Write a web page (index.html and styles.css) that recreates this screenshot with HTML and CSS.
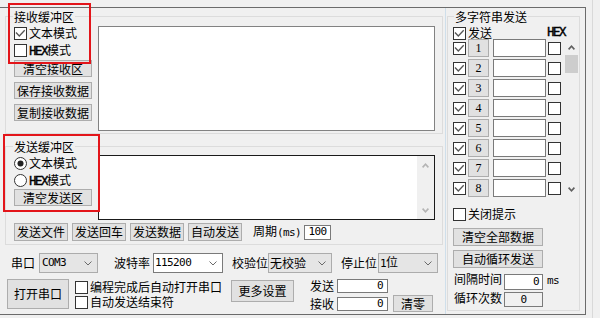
FILE: index.html
```html
<!DOCTYPE html>
<html lang="zh-CN">
<head>
<meta charset="utf-8">
<title>串口助手</title>
<link rel="stylesheet" href="styles.css">
</head>
<body>
<svg class="defs" width="0" height="0" aria-hidden="true">
  <defs>
    <symbol id="cb-off" viewBox="0 0 13 13"><rect x="0.5" y="0.5" width="12" height="12" fill="#fff" stroke="#333"/></symbol>
    <symbol id="cb-on" viewBox="0 0 13 13"><rect x="0.5" y="0.5" width="12" height="12" fill="#fff" stroke="#333"/><path d="M2 5.5 L5.3 9 L10.7 3.3" fill="none" stroke="#555" stroke-width="1.3"/></symbol>
    <symbol id="rb-on" viewBox="0 0 13 13"><circle cx="6.5" cy="6.5" r="6" fill="#fff" stroke="#333"/><circle cx="6.5" cy="6.5" r="3" fill="#222"/></symbol>
    <symbol id="rb-off" viewBox="0 0 13 13"><circle cx="6.5" cy="6.5" r="6" fill="#fff" stroke="#333"/></symbol>
    <symbol id="chev" viewBox="0 0 8 5"><path d="M0.5 0.5 L4 4 L7.5 0.5" fill="none" stroke="#6a6a6a" stroke-width="1"/></symbol>
    <symbol id="arr-up" viewBox="0 0 7 5"><path d="M0.6 4.4 L3.5 1.2 L6.4 4.4" fill="none" stroke="currentColor" stroke-width="1.6"/></symbol>
    <symbol id="arr-down" viewBox="0 0 7 5"><path d="M0.6 0.6 L3.5 3.8 L6.4 0.6" fill="none" stroke="currentColor" stroke-width="1.6"/></symbol>
  </defs>
</svg>
<div class="screen">
  <div class="window">
    <div class="left">
      <div class="group recv">
        <div class="gcol">
          <div class="legend">接收缓冲区</div>
          <div class="chk c1"><svg class="cb"><use href="#cb-on"/></svg><span>文本模式</span></div>
          <div class="chk c2"><svg class="cb"><use href="#cb-off"/></svg><span><span class="hex">HEX</span>模式</span></div>
          <button class="btn gbtn first">清空接收区</button>
          <button class="btn gbtn">保存接收数据</button>
          <button class="btn gbtn">复制接收数据</button>
        </div>
        <div class="edit recv-edit"></div>
      </div>

      <div class="group send">
        <div class="send-top">
          <div class="gcol">
            <div class="legend">发送缓冲区</div>
            <div class="chk c1"><svg class="cb"><use href="#rb-on"/></svg><span>文本模式</span></div>
            <div class="chk c2"><svg class="cb"><use href="#rb-off"/></svg><span><span class="hex">HEX</span>模式</span></div>
            <button class="btn gbtn first2">清空发送区</button>
          </div>
          <div class="edit send-edit">
            <div class="vscroll">
              <svg class="arr"><use href="#arr-up"/></svg>
              <svg class="arr"><use href="#arr-down"/></svg>
            </div>
          </div>
        </div>
        <div class="send-btns">
          <button class="btn sbtn">发送文件</button>
          <button class="btn sbtn">发送回车</button>
          <button class="btn sbtn">发送数据</button>
          <button class="btn sbtn">自动发送</button>
          <span class="period">周期<span class="a">(ms)</span></span>
          <div class="inp period-inp a">100</div>
        </div>
      </div>

      <div class="prow1">
        <span class="lbl l-port">串口</span>
        <div class="sel gray w-com"><span class="a com">COM3</span><svg class="chev"><use href="#chev"/></svg></div>
        <span class="lbl l-baud">波特率</span>
        <div class="sel white w-baud"><span class="a">115200</span><svg class="chev"><use href="#chev"/></svg></div>
        <span class="lbl l-par">校验位</span>
        <div class="sel gray w-par"><span>无校验</span><svg class="chev"><use href="#chev"/></svg></div>
        <span class="lbl l-stop">停止位</span>
        <div class="sel gray w-stop"><span><span class="a">1</span>位</span><svg class="chev"><use href="#chev"/></svg></div>
      </div>

      <div class="prow2">
        <button class="btn open-btn">打开串口</button>
        <div class="opt-col">
          <div class="chk"><svg class="cb"><use href="#cb-off"/></svg><span>编程完成后自动打开串口</span></div>
          <div class="chk"><svg class="cb"><use href="#cb-off"/></svg><span>自动发送结束符</span></div>
        </div>
        <button class="btn more-btn">更多设置</button>
        <div class="cnt">
          <span class="cnt-lbl">发送</span>
          <div class="inp cnt-inp a">0</div>
          <span class="cnt-lbl">接收</span>
          <div class="inp cnt-inp a">0</div>
        </div>
        <button class="btn clear-btn">清零</button>
      </div>
    </div>

    <div class="right">
      <div class="group multi">
        <div class="legend">多字符串发送</div>
        <div class="mhead">
          <svg class="cb"><use href="#cb-on"/></svg>
          <span class="mhead-send">发送</span>
          <span class="hex mhead-hex">HEX</span>
        </div>
        <div class="mrows">
          <div class="mlist">
            <div class="mrow"><svg class="cb"><use href="#cb-on"/></svg><button class="btn nbtn">1</button><div class="inp minp"></div><svg class="cb hcb"><use href="#cb-off"/></svg></div>
            <div class="mrow"><svg class="cb"><use href="#cb-on"/></svg><button class="btn nbtn">2</button><div class="inp minp"></div><svg class="cb hcb"><use href="#cb-off"/></svg></div>
            <div class="mrow"><svg class="cb"><use href="#cb-on"/></svg><button class="btn nbtn">3</button><div class="inp minp"></div><svg class="cb hcb"><use href="#cb-off"/></svg></div>
            <div class="mrow"><svg class="cb"><use href="#cb-on"/></svg><button class="btn nbtn">4</button><div class="inp minp"></div><svg class="cb hcb"><use href="#cb-off"/></svg></div>
            <div class="mrow"><svg class="cb"><use href="#cb-on"/></svg><button class="btn nbtn">5</button><div class="inp minp"></div><svg class="cb hcb"><use href="#cb-off"/></svg></div>
            <div class="mrow"><svg class="cb"><use href="#cb-on"/></svg><button class="btn nbtn">6</button><div class="inp minp"></div><svg class="cb hcb"><use href="#cb-off"/></svg></div>
            <div class="mrow"><svg class="cb"><use href="#cb-on"/></svg><button class="btn nbtn">7</button><div class="inp minp"></div><svg class="cb hcb"><use href="#cb-off"/></svg></div>
            <div class="mrow"><svg class="cb"><use href="#cb-on"/></svg><button class="btn nbtn">8</button><div class="inp minp"></div><svg class="cb hcb"><use href="#cb-off"/></svg></div>
          </div>
          <div class="mscroll">
            <div class="sarea"><svg class="arr dark"><use href="#arr-up"/></svg></div>
            <div class="thumb"></div>
            <div class="sfill"></div>
            <div class="sarea"><svg class="arr dark"><use href="#arr-down"/></svg></div>
          </div>
        </div>
        <div class="chk mclose"><svg class="cb"><use href="#cb-off"/></svg><span>关闭提示</span></div>
        <button class="btn wbtn w1">清空全部数据</button>
        <button class="btn wbtn w2">自动循环发送</button>
        <div class="mint">
          <span class="mlbl">间隔时间</span>
          <div class="inp mval a">0</div>
          <span class="a ms">ms</span>
        </div>
        <div class="mcnt">
          <span class="mlbl">循环次数</span>
          <div class="inp mval dis a">0</div>
        </div>
      </div>
    </div>
  </div>
  <div class="vline"></div>
  <div class="mark mark-recv"></div>
  <div class="mark mark-send"></div>
</div>
</body>
</html>
```
FILE: styles.css
```css
* { box-sizing: border-box; }
html, body { margin: 0; padding: 0; }
body {
  background: #f0f0f0;
  font-family: "Noto Sans CJK SC", "Noto Sans", sans-serif;
  font-size: 12px;
  line-height: 14px;
  color: #000;
}
.defs { position: absolute; width: 0; height: 0; overflow: hidden; }

.screen { position: relative; width: 600px; height: 318px; display: flex; overflow: hidden; }
.window {
  margin-top: 7px;
  width: 586px;
  height: 308px;
  border-top: 1px solid #6b6b6b;
  border-right: 1px solid #6b6b6b;
  border-bottom: 1px solid #6b6b6b;
  display: flex;
  flex: none;
}
.vline { margin-left: 6px; width: 1px; height: 318px; background: #d9d9d9; flex: none; }

.a { font-family: "DejaVu Sans Mono", monospace; font-size: 11px; letter-spacing: -0.6px; }
.hex {
  font-family: "Liberation Mono", monospace;
  font-weight: normal;
  font-size: 12.5px;
  letter-spacing: -1.5px;
  -webkit-text-stroke: 0.45px #000;
}

/* generic controls */
.btn {
  font: inherit;
  font-size: 12px;
  line-height: 14px;
  color: #000;
  margin: 0;
  padding: 0;
  border: 1px solid #adadad;
  background: #e1e1e1;
  display: flex;
  align-items: center;
  justify-content: center;
  white-space: nowrap;
  flex: none;
}
.edit { background: #fff; border: 1px solid #828282; flex: none; }
.inp {
  background: #fff;
  border: 1px solid #7a7a7a;
  flex: none;
  display: flex;
  align-items: center;
  justify-content: flex-end;
  padding-right: 3px;
}
.chk { display: flex; align-items: flex-start; height: 14px; gap: 2px; white-space: nowrap; flex: none; }
.cb { width: 13px; height: 13px; flex: none; margin-top: 1px; }
.arr { width: 7px; height: 5px; color: #b4b4b4; }
.arr.dark { color: #606060; }
.chev { width: 8px; height: 5px; flex: none; }

.group { border: 1px solid #dcdcdc; flex: none; }
.legend {
  margin: -7px 0 0 -1px;
  padding: 0 1px;
  height: 14px;
  line-height: 14px;
  background: #f0f0f0;
  white-space: nowrap;
  flex: none;
}

/* left panel */
.left {
  width: 446px;
  border-right: 1px solid #cfdfeb;
  display: flex;
  flex-direction: column;
  flex: none;
}
.gcol { width: 78px; display: flex; flex-direction: column; align-items: flex-start; flex: none; }
.gcol .c1 { margin-top: 2px; }
.gcol .c2 { margin-top: 3px; }
.gbtn { width: 78px; height: 17px; margin-top: 5px; }
.gbtn.first { margin-top: 3px; }
.gbtn.first2 { margin-top: 2px; }

.recv {
  margin: 8px 0 0 5px;
  width: 438px;
  height: 118px;
  display: flex;
  gap: 6px;
  padding: 0 7px 0 8px;
}
.recv-edit { margin-top: 9px; width: 337px; height: 105px; }

.send {
  margin: 12px 0 0 5px;
  width: 438px;
  height: 99px;
  padding: 0 7px 0 8px;
  display: flex;
  flex-direction: column;
}
.send-top { display: flex; gap: 6px; }
.send-edit {
  margin-top: 8px;
  width: 337px;
  height: 65px;
  border-color: #1a1a1a;
  display: flex;
  justify-content: flex-end;
}
.vscroll {
  width: 17px;
  height: 100%;
  background: #f0f0f0;
  display: flex;
  flex-direction: column;
  justify-content: space-between;
  align-items: center;
  padding: 7px 0 6px;
}
.send-btns { margin-top: 3px; height: 18px; display: flex; align-items: center; gap: 4px; }
.sbtn { width: 54px; height: 18px; }
.period { margin-left: 7px; white-space: nowrap; }
.period-inp { width: 27px; height: 15px; margin-left: -1px; justify-content: center; padding: 0; }

/* port settings */
.prow1 { margin-top: 8px; height: 20px; display: flex; align-items: center; padding-left: 11px; }
.lbl { white-space: nowrap; flex: none; }
.l-port { margin-right: 4px; }
.l-baud { margin: 0 3px 0 16px; }
.l-par { margin: 0 0 0 9px; width: 36px; }
.l-stop { margin: 0 1px 0 9px; width: 36px; }
.sel {
  height: 20px;
  border: 1px solid #acacac;
  background: #e5e5e5;
  display: flex;
  align-items: center;
  justify-content: space-between;
  padding: 0 5px 0 1px;
  flex: none;
}
.sel.white { background: #fff; border-color: #7a7a7a; }
.w-com { width: 59px; padding-left: 2px; }
.w-baud { width: 70px; }
.w-par { width: 64px; }
.w-stop { width: 60px; }

.prow2 { margin-top: 6px; display: flex; align-items: flex-start; padding-left: 7px; }
.open-btn { width: 62px; height: 30px; }
.opt-col { margin: 1px 0 0 6px; display: flex; flex-direction: column; gap: 1px; }
.more-btn { margin: 1px 0 0 9px; width: 63px; height: 22px; }
.cnt {
  margin-left: 16px;
  display: grid;
  grid-template-columns: 24px 51px;
  column-gap: 3px;
  row-gap: 4px;
}
.cnt-lbl { line-height: 14px; }
.cnt-inp { height: 14px; padding-right: 4px; }
.clear-btn { margin: 16px 0 0 5px; width: 40px; height: 17px; }

/* right panel */
.right { width: 139px; flex: none; }
.multi {
  margin: 8px 0 0 1px;
  width: 133px;
  height: 295px;
  padding: 0 1px 0 5px;
  display: flex;
  flex-direction: column;
  align-items: flex-start;
}
.multi .legend { margin-left: 1px; }
.mhead { margin-top: 2px; height: 13px; display: flex; align-items: flex-start; }
.mhead-send { margin-left: 2px; line-height: 14px; }
.mhead-hex { margin-left: 55px; line-height: 14px; margin-top: 0; }
.mrows { display: flex; gap: 4px; }
.mlist { display: flex; flex-direction: column; gap: 2px; }
.mrow { display: flex; align-items: center; height: 18px; }
.mrow .cb { margin-top: 0; }
.nbtn {
  margin-left: 2px;
  width: 21px;
  height: 18px;
  font-family: "Liberation Serif", serif;
  font-size: 12px;
}
.minp { margin-left: 4px; width: 53px; height: 18px; }
.hcb { margin-left: 2px; }
.mscroll { width: 13px; height: 158px; display: flex; flex-direction: column; align-items: center; }
.sarea { height: 16px; width: 13px; display: flex; align-items: center; justify-content: center; flex: none; }
.thumb { width: 13px; height: 18px; background: #cdcdcd; flex: none; }
.sfill { flex: 1; }
.mclose { margin-top: 10px; }
.wbtn { width: 90px; height: 18px; }
.w1 { margin-top: 7px; }
.w2 { margin-top: 4px; }
.mint { margin-top: 4px; height: 18px; display: flex; align-items: flex-start; }
.mcnt { margin-top: 1px; height: 16px; display: flex; align-items: flex-start; }
.mlbl { margin-left: 1px; width: 48px; white-space: nowrap; line-height: 14px; }
.mval { margin: 2px 0 0 2px; width: 39px; height: 16px; }
.mcnt .mval { margin-top: 1px; height: 15px; }
.mval.dis { background: #f0f0f0; justify-content: center; padding: 0; }
.ms { margin: 2px 0 0 4px; line-height: 14px; }

/* red annotation frames */
.mark { position: absolute; border: 2px solid #e3151a; }
.mark-recv { left: 8px; top: 3px; width: 83px; height: 61px; }
.mark-send { left: 3px; top: 134px; width: 97px; height: 78px; }
```
